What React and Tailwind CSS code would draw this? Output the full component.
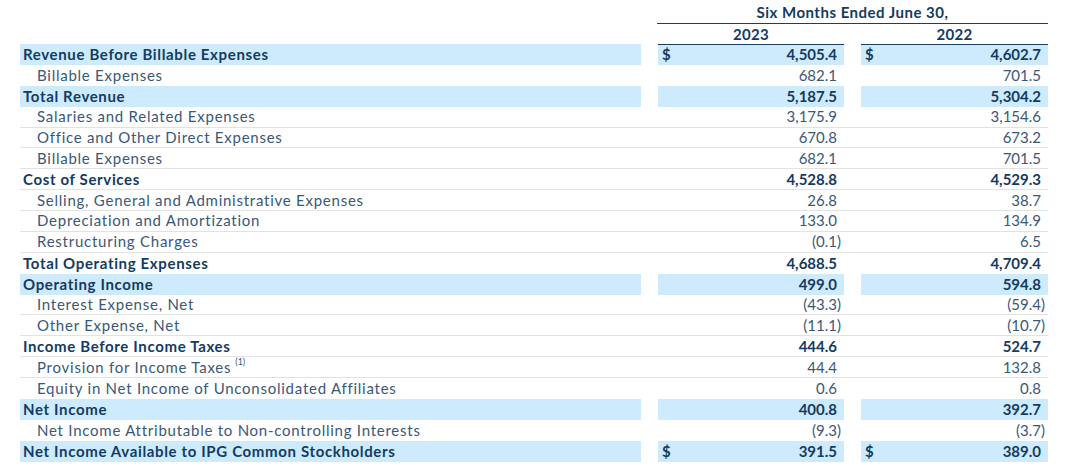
import React from "react";

const rows = [
  { label: "Revenue Before Billable Expenses", a: "4,505.4", b: "4,602.7", bold: true, hl: true, dollar: true },
  { label: "Billable Expenses", a: "682.1", b: "701.5" },
  { label: "Total Revenue", a: "5,187.5", b: "5,304.2", bold: true, hl: true },
  { label: "Salaries and Related Expenses", a: "3,175.9", b: "3,154.6" },
  { label: "Office and Other Direct Expenses", a: "670.8", b: "673.2" },
  { label: "Billable Expenses", a: "682.1", b: "701.5" },
  { label: "Cost of Services", a: "4,528.8", b: "4,529.3", bold: true },
  { label: "Selling, General and Administrative Expenses", a: "26.8", b: "38.7" },
  { label: "Depreciation and Amortization", a: "133.0", b: "134.9" },
  { label: "Restructuring Charges", a: "(0.1)", b: "6.5" },
  { label: "Total Operating Expenses", a: "4,688.5", b: "4,709.4", bold: true },
  { label: "Operating Income", a: "499.0", b: "594.8", bold: true, hl: true },
  { label: "Interest Expense, Net", a: "(43.3)", b: "(59.4)" },
  { label: "Other Expense, Net", a: "(11.1)", b: "(10.7)" },
  { label: "Income Before Income Taxes", a: "444.6", b: "524.7", bold: true },
  { label: "Provision for Income Taxes", a: "44.4", b: "132.8", note: "(1)" },
  { label: "Equity in Net Income of Unconsolidated Affiliates", a: "0.6", b: "0.8" },
  { label: "Net Income", a: "400.8", b: "392.7", bold: true, hl: true },
  { label: "Net Income Attributable to Non-controlling Interests", a: "(9.3)", b: "(3.7)" },
  { label: "Net Income Available to IPG Common Stockholders", a: "391.5", b: "389.0", bold: true, hl: true, dollar: true },
];

const Num = ({ value, dollar, hl, width, top }) => {
  const neg = value.endsWith(")");
  const main = neg ? value.slice(0, -1) : value;
  return (
    <div
      className={`${width} flex items-center justify-between pl-[4px] h-full ${hl ? "bg-[#cdebfc]" : ""} ${
        top ? "border-t border-[#1d3e63]" : ""
      }`}
    >
      <span>{dollar ? "$" : ""}</span>
      <span className="flex">
        <span>{main}</span>
        <span className="w-[7px]">{neg ? ")" : ""}</span>
      </span>
    </div>
  );
};

const App = () => {
  return (
    <div
      className="w-[1080px] h-[471px] bg-white overflow-hidden text-[15px] text-[#3a5878]"
      style={{ fontFamily: "Lato, 'Open Sans', sans-serif" }}
    >
      <div className="ml-[657px] w-[391px] h-[24px] border-b border-[#1d3e63] text-center font-bold text-[#133b63] leading-[24px] tracking-[0.5px]">
        Six Months Ended June 30,
      </div>
      <div className="flex ml-[658px] h-[20px] font-bold text-[#133b63] leading-[20px] tracking-[0.3px]">
        <div className="w-[186px] text-center">2023</div>
        <div className="w-[17px]" />
        <div className="w-[187px] text-center">2022</div>
      </div>
      <div className="ml-[20px] w-[1028px]">
        {rows.map((r, i) => {
          const next = rows[i + 1];
          const line = !r.hl && next && !next.hl;
          return (
            <div
              key={i}
              className={`flex h-[20.88px] leading-none ${r.bold ? "font-bold text-[#133b63]" : ""} ${
                line ? "border-b border-[#e2e2e2]" : ""
              }`}
            >
              <div
                className={`w-[621px] flex items-center h-full ${r.hl ? "bg-[#cdebfc]" : ""} ${
                  r.bold ? "pl-[3px] tracking-[0.65px]" : "pl-[17px] tracking-[0.75px]"
                }`}
              >
                {r.label}
                {r.note && <sup className="text-[9px] ml-[4px] -top-[5px] tracking-normal">{r.note}</sup>}
              </div>
              <div className="w-[17px]" />
              <Num value={r.a} dollar={r.dollar} hl={r.hl} width="w-[186px]" top={i === 0} />
              <div className="w-[17px]" />
              <Num value={r.b} dollar={r.dollar} hl={r.hl} width="w-[187px]" top={i === 0} />
            </div>
          );
        })}
      </div>
    </div>
  );
};

export default App;
